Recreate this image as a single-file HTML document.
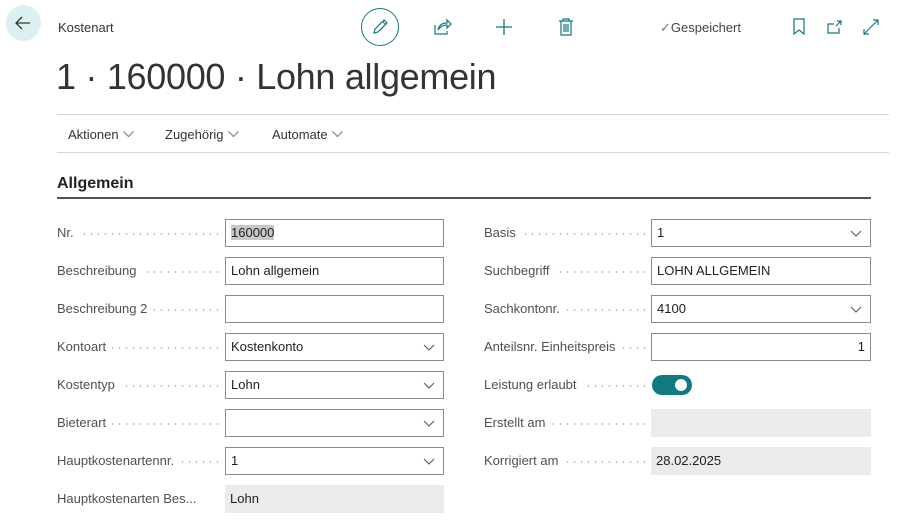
<!DOCTYPE html>
<html><head><meta charset="utf-8"><style>
*{margin:0;padding:0;box-sizing:border-box}
body{width:915px;height:522px;background:#fff;font-family:"Liberation Sans",sans-serif;position:relative;overflow:hidden;color:#212121}
.a{position:absolute}
.lbl{position:absolute;font-size:13px;color:#505050;height:28px;line-height:28px;overflow:hidden;white-space:nowrap}
.lbl span{background:#fff;padding-right:6px}
.dots{position:absolute;height:2px;background-image:radial-gradient(circle,#c4c4c4 0.8px,transparent 1px);background-size:7px 2px}
.inp{position:absolute;height:28px;border:1px solid #8a8a8a;font-size:13px;line-height:26px;padding-left:5px;color:#212121;background:#fff}
.ro{border:none;background:#eaebec;line-height:28px}
.chev{position:absolute;right:8px;top:8px}
.tab{position:absolute;top:127px;font-size:13px;color:#333}
.tab svg{margin-left:4px;vertical-align:1px}
</style></head><body>
<div class="a" style="left:6px;top:5px;width:35px;height:36px;border-radius:50%;background:#dcf0f0"></div>
<svg class="a" style="left:13px;top:15px" width="20" height="16" viewBox="0 0 20 16"><path d="M17 8H3M9 2L3 8l6 6" fill="none" stroke="#333" stroke-width="1.3"/></svg>
<div class="a" style="left:58px;top:20px;font-size:13px;color:#333">Kostenart</div>
<div class="a" style="left:361px;top:8px;width:38px;height:38px;border:1.3px solid #0f7b80;border-radius:50%"></div>
<svg class="a" style="left:370px;top:17px" width="20" height="20" viewBox="0 0 20 20"><path d="M4 16l1-4 9-9 3 3-9 9z M12.5 4.5l3 3" fill="none" stroke="#0f7b80" stroke-width="1.2"/></svg>
<svg class="a" style="left:432px;top:17px" width="20" height="20" viewBox="0 0 20 20"><path d="M3 8v9h12v-3 M6 13c1-5 4-7 9-7V3l4 4-4 4V8c-4 0-7 2-9 5z" fill="none" stroke="#0f7b80" stroke-width="1.2"/></svg>
<svg class="a" style="left:494px;top:17px" width="20" height="20" viewBox="0 0 20 20"><path d="M10 2v16M2 10h16" stroke="#0f7b80" stroke-width="1.3"/></svg>
<svg class="a" style="left:556px;top:17px" width="20" height="20" viewBox="0 0 20 20"><path d="M3 4h14M7 4V2h6v2M5 4v14h10V4M8 7v8M10 7v8M12 7v8" fill="none" stroke="#0f7b80" stroke-width="1.2"/></svg>
<div class="a" style="left:660px;top:20px;font-size:13px;color:#444"><span style="color:#777">✓</span>Gespeichert</div>
<svg class="a" style="left:792px;top:18px" width="14" height="18" viewBox="0 0 14 18"><path d="M2 1h10v15l-5-4-5 4z" fill="none" stroke="#0f7b80" stroke-width="1.2"/></svg>
<svg class="a" style="left:826px;top:18px" width="18" height="18" viewBox="0 0 18 18"><path d="M8 6H2v9h11V10M11 3h4v4M15 3l-5 5" fill="none" stroke="#0f7b80" stroke-width="1.2"/></svg>
<svg class="a" style="left:862px;top:18px" width="18" height="18" viewBox="0 0 18 18"><path d="M2 16L16 2M11 2h5v5M2 11v5h5" fill="none" stroke="#0f7b80" stroke-width="1.2"/></svg>
<div class="a" style="left:56px;top:56px;font-size:36px;font-weight:300;color:#333;letter-spacing:-0.3px">1 · 160000 · Lohn allgemein</div>
<div class="a" style="left:57px;top:114px;width:832px;height:1px;background:#d6d6d6"></div>
<div class="a" style="left:57px;top:152px;width:832px;height:1px;background:#d6d6d6"></div>
<div class="tab" style="left:68px">Aktionen<svg width="11" height="7"><path d="M0.5 0.5l5 5 5-5" fill="none" stroke="#777"/></svg></div>
<div class="tab" style="left:165px">Zugehörig<svg width="11" height="7"><path d="M0.5 0.5l5 5 5-5" fill="none" stroke="#777"/></svg></div>
<div class="tab" style="left:272px">Automate<svg width="11" height="7"><path d="M0.5 0.5l5 5 5-5" fill="none" stroke="#777"/></svg></div>
<div class="a" style="left:57px;top:175px;font-size:16px;font-weight:bold;color:#222">Allgemein</div>
<div class="a" style="left:57px;top:197px;width:814px;height:2px;background:#4d535c"></div>

<!-- left column -->
<div class="dots" style="left:60px;top:233px;width:160px"></div><div class="lbl" style="left:57px;top:219px"><span>Nr.</span></div>
<div class="inp" style="left:225px;top:219px;width:219px"><span style="background:#c8c8c8">160000</span></div>
<div class="dots" style="left:60px;top:271px;width:160px"></div><div class="lbl" style="left:57px;top:257px"><span>Beschreibung</span></div>
<div class="inp" style="left:225px;top:257px;width:219px">Lohn allgemein</div>
<div class="dots" style="left:60px;top:309px;width:160px"></div><div class="lbl" style="left:57px;top:295px"><span>Beschreibung 2</span></div>
<div class="inp" style="left:225px;top:295px;width:219px"></div>
<div class="dots" style="left:60px;top:347px;width:160px"></div><div class="lbl" style="left:57px;top:333px"><span>Kontoart</span></div>
<div class="inp" style="left:225px;top:333px;width:219px">Kostenkonto<svg class="chev" width="12" height="10"><path d="M1 3l5 5 5-5" fill="none" stroke="#555"/></svg></div>
<div class="dots" style="left:60px;top:385px;width:160px"></div><div class="lbl" style="left:57px;top:371px"><span>Kostentyp</span></div>
<div class="inp" style="left:225px;top:371px;width:219px">Lohn<svg class="chev" width="12" height="10"><path d="M1 3l5 5 5-5" fill="none" stroke="#555"/></svg></div>
<div class="dots" style="left:60px;top:423px;width:160px"></div><div class="lbl" style="left:57px;top:409px"><span>Bieterart</span></div>
<div class="inp" style="left:225px;top:409px;width:219px"><svg class="chev" width="12" height="10"><path d="M1 3l5 5 5-5" fill="none" stroke="#555"/></svg></div>
<div class="dots" style="left:60px;top:461px;width:160px"></div><div class="lbl" style="left:57px;top:447px"><span>Hauptkostenartennr.</span></div>
<div class="inp" style="left:225px;top:447px;width:219px">1<svg class="chev" width="12" height="10"><path d="M1 3l5 5 5-5" fill="none" stroke="#555"/></svg></div>
<div class="lbl" style="left:57px;top:485px"><span>Hauptkostenarten Bes...</span></div>
<div class="inp ro" style="left:225px;top:485px;width:219px">Lohn</div>

<!-- right column -->
<div class="dots" style="left:487px;top:233px;width:160px"></div><div class="lbl" style="left:484px;top:219px"><span>Basis</span></div>
<div class="inp" style="left:651px;top:219px;width:220px">1<svg class="chev" width="12" height="10"><path d="M1 3l5 5 5-5" fill="none" stroke="#555"/></svg></div>
<div class="dots" style="left:487px;top:271px;width:160px"></div><div class="lbl" style="left:484px;top:257px"><span>Suchbegriff</span></div>
<div class="inp" style="left:651px;top:257px;width:220px">LOHN ALLGEMEIN</div>
<div class="dots" style="left:487px;top:309px;width:160px"></div><div class="lbl" style="left:484px;top:295px"><span>Sachkontonr.</span></div>
<div class="inp" style="left:651px;top:295px;width:220px">4100<svg class="chev" width="12" height="10"><path d="M1 3l5 5 5-5" fill="none" stroke="#555"/></svg></div>
<div class="dots" style="left:487px;top:347px;width:160px"></div><div class="lbl" style="left:484px;top:333px"><span>Anteilsnr. Einheitspreis</span></div>
<div class="inp" style="left:651px;top:333px;width:220px;text-align:right;padding-right:5px">1</div>
<div class="dots" style="left:487px;top:385px;width:160px"></div><div class="lbl" style="left:484px;top:371px"><span>Leistung erlaubt</span></div>
<div class="a" style="left:652px;top:375px;width:40px;height:20px;border-radius:10px;background:#0f7b80"></div>
<div class="a" style="left:675px;top:379px;width:12px;height:12px;border-radius:50%;background:#fff"></div>
<div class="dots" style="left:487px;top:423px;width:160px"></div><div class="lbl" style="left:484px;top:409px"><span>Erstellt am</span></div>
<div class="inp ro" style="left:651px;top:409px;width:220px"></div>
<div class="dots" style="left:487px;top:461px;width:160px"></div><div class="lbl" style="left:484px;top:447px"><span>Korrigiert am</span></div>
<div class="inp ro" style="left:651px;top:447px;width:220px">28.02.2025</div>
</body></html>
